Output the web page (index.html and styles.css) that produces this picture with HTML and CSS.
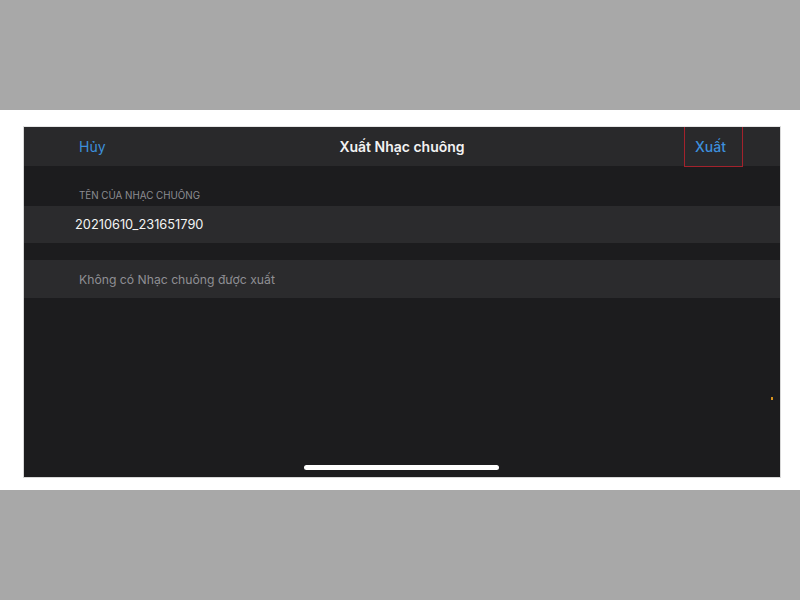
FILE: index.html
```html
<!DOCTYPE html>
<html lang="vi">
<head>
<meta charset="utf-8">
<title>Xuất Nhạc chuông</title>
<link rel="stylesheet" href="styles.css">
</head>
<body>
<div class="band-top"></div>
<div class="band">
  <div class="phone">
    <header class="nav">
      <span class="nav-btn">Hủy</span>
      <span class="nav-title">Xuất Nhạc chuông</span>
      <span class="nav-btn nav-right">Xuất</span>
      <span class="mark"></span>
    </header>
    <div class="section-label">TÊN CỦA NHẠC CHUÔNG</div>
    <div class="row row-name">20210610_231651790</div>
    <div class="spacer"></div>
    <div class="row row-empty">Không có Nhạc chuông được xuất</div>
    <div class="fill"></div>
    <div class="home-bar"></div>
    <span class="dot"></span>
  </div>
</div>
<div class="band-bottom"></div>
</body>
</html>
```
FILE: styles.css
```css
html, body {
  margin: 0;
  padding: 0;
}

body {
  width: 800px;
  height: 600px;
  background: #a8a8a8;
  font-family: "Inter", "Liberation Sans", sans-serif;
  display: flex;
  flex-direction: column;
}

.band-top {
  height: 110px;
  background: #a8a8a8;
}

.band {
  height: 380px;
  background: #ffffff;
  padding: 16px 0 0 23px;
  box-sizing: border-box;
}

.band-bottom {
  flex: 1;
  background: #a8a8a8;
}

.phone {
  position: relative;
  width: 756px;
  height: 350px;
  background: #1c1c1e;
  border: 1px solid #d8d8d8;
  border-top-color: #e6e6e6;
  display: flex;
  flex-direction: column;
}

.nav {
  height: 39px;
  background: #29292b;
  display: flex;
  align-items: center;
  padding: 0 0 0 55px;
  position: relative;
  flex-shrink: 0;
}

.nav-btn {
  color: #3d8fdc;
  font-size: 14px;
  width: 70px;
}

.nav-title {
  position: absolute;
  left: 0;
  right: 0;
  text-align: center;
  color: #f2f2f2;
  font-size: 14px;
  font-weight: 600;
  pointer-events: none;
}

.nav-right {
  margin-left: auto;
  width: auto;
  margin-right: 54px;
  font-weight: 500;
}

/* red highlight drawn round the export button */
.mark {
  position: absolute;
  left: 660px;
  top: 0;
  width: 57px;
  height: 39px;
  border: 1px solid #a3222c;
  border-top: none;
}

.section-label {
  height: 40px;
  box-sizing: border-box;
  padding: 24px 0 0 55px;
  color: #8d8d92;
  font-size: 9.8px;
}

.row {
  background: #2b2b2d;
  display: flex;
  align-items: center;
  flex-shrink: 0;
}

.row-name {
  height: 37px;
  padding-left: 51px;
  color: #f4f4f4;
  font-size: 12.8px;
}

.spacer {
  height: 17px;
  flex-shrink: 0;
}

.row-empty {
  height: 38px;
  padding-left: 55px;
  color: #8f8f94;
  font-size: 12.2px;
}

.fill {
  flex: 1;
}

.home-bar {
  align-self: center;
  width: 195px;
  height: 5px;
  border-radius: 3px;
  background: #ffffff;
  margin: 0 0 7px -2px;
}

.dot {
  position: absolute;
  left: 747px;
  top: 270px;
  width: 2px;
  height: 3px;
  background: #d8931e;
}
```
